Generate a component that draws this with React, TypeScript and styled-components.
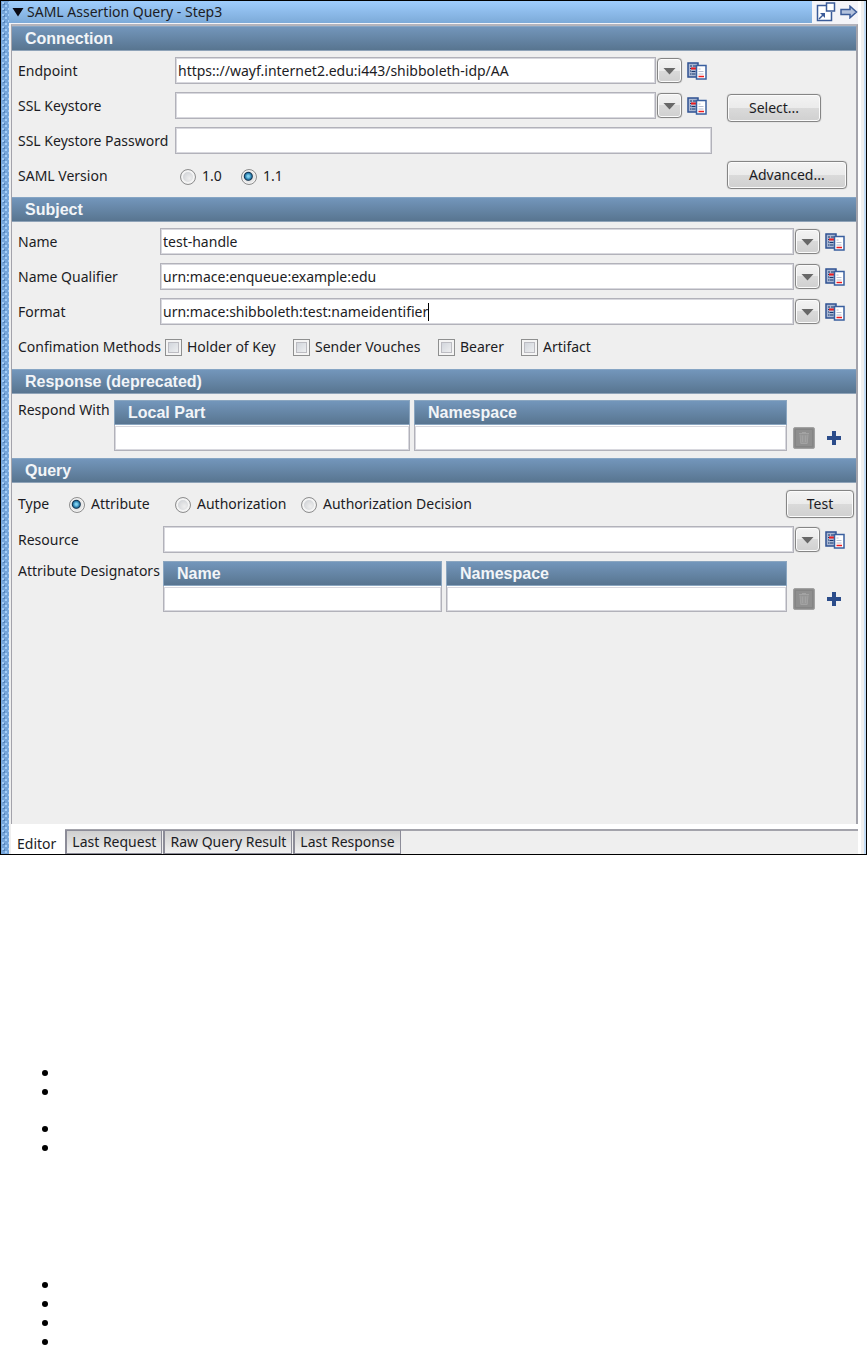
import React, { useId } from "react";
import styled, { createGlobalStyle } from "styled-components";

const GlobalStyle = createGlobalStyle`
  *, *::before, *::after { box-sizing: border-box; }
  body { margin: 0; background: #fff; color: #1c1c24; font: 14px/20px "Noto Sans", sans-serif; }
  button, input { font: inherit; color: inherit; }
  h1, h2, ul { margin: 0; padding: 0; }
`;

const barGradient = "linear-gradient(#7396bb, #587590)";

const Window = styled.main`
  display: flex;
  margin-right: 1px;
  border: 1px solid #000;
  background: #efefef;
`;

const Grip = styled.div`
  flex: 0 0 8px;
  background:
    radial-gradient(circle at 2px 2px, #a3cdf8 1px, transparent 1px) 0 0 / 6px 6px,
    radial-gradient(circle at 3px 3px, #5684bb 1px, transparent 1px) 0 0 / 6px 6px,
    radial-gradient(circle at 5px 5px, #a3cdf8 1px, transparent 1px) 0 0 / 6px 6px,
    #75a5da;
`;

const Content = styled.div`
  flex: 1;
  min-width: 0;
`;

const Edge = styled.div`
  flex: 0 0 8px;
  border-left: 3px solid #fff;
  border-right: 2px solid #c3dcf5;
`;

const TitleBar = styled.header`
  display: flex;
  height: 23px;
  border-bottom: 1px solid #f4f4f8;
  background: #f4f4f8;
`;

const TitleToggle = styled.button`
  flex: 1;
  display: flex;
  align-items: center;
  gap: 3px;
  padding: 0 3px;
  border: 0;
  background: linear-gradient(#9fcdfd, #7caad8);
`;

const Title = styled.h1`
  font-size: 14px;
  font-weight: 400;
  line-height: 20px;
`;

const TitleActions = styled.div`
  display: flex;
  align-items: center;
  gap: 4px;
  padding: 0 0 0 4px;
`;

const IconButton = styled.button`
  display: flex;
  align-items: center;
  justify-content: center;
  flex: none;
  padding: 0;
  border: 0;
  background: none;
`;

const Panel = styled.div`
  min-height: 800px;
  margin-left: 2px;
  border: 1px solid #a3a3ab;
  border-top: 2px solid #b4b4bc;
  border-right-width: 2px;
  border-bottom: 0;
`;

const SectionTitle = styled.h2`
  height: 25px;
  padding-left: 13px;
  border-top: 1px solid #86a5c4;
  border-bottom: 1px solid #8fa3b8;
  background: ${barGradient};
  color: #f2f5f8;
  font: bold 16px/24px "Liberation Sans", sans-serif;
`;

const ConnectionBody = styled.div`
  display: grid;
  grid-template-columns: 1fr 129px;
  gap: 15px;
  padding: 2px 0 3px 6px;
`;

const ButtonColumn = styled.div`
  display: flex;
  flex-direction: column;
  align-items: flex-start;
  gap: 39px;
  padding-top: 41px;
`;

const SectionBody = styled.div<{ $top?: number }>`
  padding: ${(p) => p.$top ?? 2}px 0 4px 6px;
`;

const FieldRow = styled.div<{ $label: number; $end: number }>`
  display: grid;
  grid-template-columns: ${(p) => p.$label}px 1fr;
  align-items: center;
  height: 35px;
  padding-right: ${(p) => p.$end}px;
`;

const FieldGroup = styled.div`
  display: flex;
  align-items: center;
  min-width: 0;
`;

const InputShell = styled.span`
  flex: 1;
  display: flex;
  align-items: center;
  min-width: 0;
  height: 27px;
  padding: 0 2px;
  border: 1px solid #b2b2ba;
  outline: 1px solid #d8d8de;
  outline-offset: -2px;
  background: #fff;
`;

const TextInput = styled.input<{ $fit?: boolean }>`
  ${(p) => (p.$fit ? "field-sizing: content;" : "flex: 1;")}
  min-width: 0;
  height: 20px;
  padding: 0;
  border: 0;
  outline: 0;
  background: none;
`;

const Caret = styled.span`
  width: 1px;
  height: 18px;
  background: #000;
`;

const RaisedButton = styled.button`
  height: 28px;
  padding: 0 21px;
  border: 1px solid #858585;
  border-radius: 4px;
  box-shadow: inset 0 0 0 1px #fbfbfb, 0 0 1px #999;
  background: linear-gradient(#f3f3f3, #ebebeb 50%, #dadada 50%, #d0d0d0);
`;

const TestButton = styled(RaisedButton)`
  margin-right: 2px;
  padding: 0;
`;

const DropButton = styled(RaisedButton)`
  display: flex;
  align-items: center;
  justify-content: center;
  width: 25px;
  height: 25px;
  margin: 0 5px 0 1px;
  padding: 0;
`;

const Choices = styled.div<{ $columns: string }>`
  display: grid;
  grid-template-columns: ${(p) => p.$columns};
  align-items: center;
  height: 36px;
`;

const ChoiceLabel = styled.label<{ $gap?: number }>`
  display: flex;
  align-items: center;
  gap: ${(p) => p.$gap ?? 6}px;
  white-space: nowrap;
`;

const Radio = styled.input`
  appearance: none;
  width: 16px;
  height: 16px;
  margin: 2px 0 0;
  border: 1px solid #8e8e8e;
  border-radius: 50%;
  box-shadow: inset 0 0 0 2px #f4f4f4;
  background: radial-gradient(circle at 60% 60%, #eee, #bfc3c9);
  &:checked {
    background: radial-gradient(circle at 45% 45%, #7fd0ee 0 1px, #2a7eae 3px, #12334f 4px, #e6e6e6 5px);
    box-shadow: inset 0 0 0 1px #f4f4f4;
  }
`;

const Checkbox = styled.input`
  appearance: none;
  width: 17px;
  height: 17px;
  margin: 0;
  border: 1px solid #8e8f8f;
  outline: 1px solid #bcbcc2;
  outline-offset: -4px;
  box-shadow: inset 0 0 0 2px #f4f4f4;
  background: linear-gradient(135deg, #c9ced6, #f6f6f6);
`;

const TableRow = styled.div<{ $label: number; $top: number; $bottom: number }>`
  display: grid;
  grid-template-columns: ${(p) => p.$label}px 1fr auto;
  padding: ${(p) => p.$top}px 14px ${(p) => p.$bottom}px 0;
`;

const DataTable = styled.table`
  width: 100%;
  table-layout: fixed;
  border-collapse: collapse;
`;

const HeadCell = styled.th<{ $width?: string; $first?: boolean }>`
  width: ${(p) => p.$width ?? "auto"};
  height: 25px;
  padding: 0 ${(p) => (p.$first ? 4 : 0)}px 0 0;
  text-align: left;
`;

const HeadFill = styled.div`
  height: 25px;
  padding-left: 13px;
  border: 1px solid #8ba6c0;
  background: ${barGradient};
  color: #f2f5f8;
  font: bold 16px/24px "Liberation Sans", sans-serif;
`;

const BodyCell = styled.td<{ $first?: boolean }>`
  padding: 0 ${(p) => (p.$first ? 4 : 0)}px 0 0;
`;

const CellInput = styled.input`
  display: block;
  width: 100%;
  height: 26px;
  padding: 0 3px;
  border: 1px solid #b2b2ba;
  border-top: 0;
  outline: 1px solid #d8d8de;
  outline-offset: -2px;
  background: #fff;
`;

const TableActions = styled.div`
  display: flex;
  align-items: center;
  align-self: end;
  gap: 11px;
  padding: 0 0 2px 6px;
`;

const TabBar = styled.div`
  display: flex;
  height: 30px;
  margin-left: 2px;
`;

const ActiveTab = styled.button`
  padding: 9px 9px 0 6px;
  border: 0;
  background: #fff;
`;

const TabRest = styled.div`
  flex: 1;
  display: flex;
  border-top: 5px solid #fff;
`;

const TabLine = styled.div`
  flex: 1;
  display: flex;
  gap: 1px;
  border-top: 2px solid #a3a3ab;
`;

const Tab = styled.button`
  height: 24px;
  margin-top: -1px;
  padding: 0 5px;
  border: 1px solid #8c8c98;
  border-left-width: 2px;
  background: linear-gradient(#cfcfcf, #f1f1f1);
  line-height: 20px;
`;

const Notes = styled.section`
  padding: 215px 0 0 42px;
`;

const BulletList = styled.ul<{ $gap: number }>`
  display: grid;
  gap: 13px;
  padding-bottom: ${(p) => p.$gap}px;
  list-style: none;
`;

const Bullet = styled.li`
  width: 6px;
  height: 6px;
  border-radius: 50%;
  background: #000;
`;

const ArrowDown = () => (
  <svg width="13" height="8" viewBox="0 0 13 8" aria-hidden="true">
    <path d="M0.500 1h12L6.500 7.500z" fill="#686868" />
  </svg>
);

const CompareIcon = () => (
  <svg width="20" height="18" viewBox="0 0 20 18" aria-hidden="true">
    <rect x="1" y="1" width="10" height="14" fill="#a9b7d3" stroke="#2f5292" strokeWidth="1.500" />
    <path d="M3 4h2M3 6.500h1M3 9h1M3 12h1" stroke="#17386f" />
    <path d="M4.500 9.500h4M4.500 12h4M6 4h3" stroke="#17386f" />
    <path d="M4 6.500h5" stroke="#f01c1c" strokeWidth="2" />
    <rect x="9.500" y="3.500" width="9.500" height="13.500" fill="#fff" stroke="#3a5f9f" strokeWidth="1.500" />
    <path d="M11.500 7h2M11.500 9.500h5M11.500 12h5" stroke="#b5bdd0" />
    <path d="M11.500 14.500h5.500" stroke="#f01c1c" strokeWidth="1.500" />
  </svg>
);

const TrashIcon = () => (
  <svg width="22" height="22" viewBox="0 0 22 22" aria-hidden="true">
    <rect x="0.500" y="0.500" width="21" height="21" rx="1.500" fill="#8c8c8c" stroke="#a2a2a2" />
    <rect x="2.500" y="2.500" width="17" height="17" fill="#8f8f8f" stroke="#858585" />
    <path d="M6 6.500h10M9 5.500h4M7 7.500l.8 9h6.400l.8-9M9.500 8.500v6.500M12.500 8.500v6.500" fill="#999" stroke="#a3a3a3" />
  </svg>
);

const PlusIcon = () => (
  <svg width="16" height="16" viewBox="0 0 16 16" aria-hidden="true">
    <path d="M6 1h4v5h5v4h-5v5H6v-5H1V6h5z" fill="#2b4c8a" />
  </svg>
);

const PopOutIcon = () => (
  <svg width="20" height="20" viewBox="0 0 20 20" aria-hidden="true">
    <path d="M1 4h9v6h6v9H1z" fill="#fff" />
    <path d="M11 3.500H1.500v15h14V10" fill="none" stroke="#3b5b98" strokeWidth="1.500" />
    <rect x="10.500" y="1" width="8" height="8" fill="#fff" stroke="#3b5b98" strokeWidth="1.500" />
    <path d="M3 17l4-4" stroke="#3b5b98" strokeWidth="1.500" />
    <path d="M4 11h5v5z" fill="#3b5b98" />
  </svg>
);

const ArrowRightIcon = () => (
  <svg width="18" height="14" viewBox="0 0 18 14" aria-hidden="true">
    <path d="M1 4.500h9V1.200L16.500 7 10 12.800V9.500H1z" fill="#b4c2dc" stroke="#3b5b98" strokeWidth="1.500" />
  </svg>
);

interface FieldProps {
  label: string;
  labelWidth: number;
  end?: number;
  value?: string;
  type?: string;
  plain?: boolean;
  caret?: boolean;
}

function Field({ label, labelWidth, end = 0, value = "", type = "text", plain, caret }: FieldProps) {
  const id = useId();
  return (
    <FieldRow $label={labelWidth} $end={end}>
      <label htmlFor={id}>{label}</label>
      <FieldGroup>
        <InputShell>
          <TextInput id={id} type={type} defaultValue={value} $fit={caret} />
          {caret && <Caret />}
        </InputShell>
        {!plain && (
          <>
            <DropButton type="button" aria-label={`${label} source`}><ArrowDown /></DropButton>
            <IconButton type="button" aria-label={`${label} values`}><CompareIcon /></IconButton>
          </>
        )}
      </FieldGroup>
    </FieldRow>
  );
}

function RadioOption({ name, label, checked }: { name: string; label: string; checked?: boolean }) {
  return (
    <ChoiceLabel>
      <Radio type="radio" name={name} defaultChecked={checked} />
      {label}
    </ChoiceLabel>
  );
}

interface PairTableProps {
  label: string;
  labelWidth: number;
  columns: [string, string];
  split: string;
  top: number;
  bottom: number;
}

function PairTable({ label, labelWidth, columns, split, top, bottom }: PairTableProps) {
  const id = useId();
  return (
    <TableRow $label={labelWidth} $top={top} $bottom={bottom}>
      <span id={id}>{label}</span>
      <DataTable aria-labelledby={id}>
        <thead>
          <tr>
            <HeadCell $first $width={split}><HeadFill>{columns[0]}</HeadFill></HeadCell>
            <HeadCell><HeadFill>{columns[1]}</HeadFill></HeadCell>
          </tr>
        </thead>
        <tbody>
          <tr>
            <BodyCell $first><CellInput aria-label={columns[0]} /></BodyCell>
            <BodyCell><CellInput aria-label={columns[1]} /></BodyCell>
          </tr>
        </tbody>
      </DataTable>
      <TableActions>
        <IconButton type="button" aria-label="Delete row" disabled><TrashIcon /></IconButton>
        <IconButton type="button" aria-label="Add row"><PlusIcon /></IconButton>
      </TableActions>
    </TableRow>
  );
}

const methods = ["Holder of Key", "Sender Vouches", "Bearer", "Artifact"];
const otherTabs = ["Last Request", "Raw Query Result", "Last Response"];

export default function App() {
  return (
    <>
      <GlobalStyle />
      <Window>
        <Grip />
        <Content>
          <TitleBar>
            <TitleToggle type="button">
              <svg width="12" height="10" viewBox="0 0 12 10" aria-hidden="true">
                <path d="M0.500 1h11L6 9.500z" fill="#0a0a14" />
              </svg>
              <Title>SAML Assertion Query - Step3</Title>
            </TitleToggle>
            <TitleActions>
              <IconButton type="button" aria-label="Open in window"><PopOutIcon /></IconButton>
              <IconButton type="button" aria-label="Next"><ArrowRightIcon /></IconButton>
            </TitleActions>
          </TitleBar>
          <Panel>
            <SectionTitle>Connection</SectionTitle>
            <ConnectionBody>
              <div>
                <Field label="Endpoint" labelWidth={157} end={5} value="https:://wayf.internet2.edu:i443/shibboleth-idp/AA" />
                <Field label="SSL Keystore" labelWidth={157} end={5} />
                <Field label="SSL Keystore Password" labelWidth={157} type="password" plain />
                <Choices role="radiogroup" aria-label="SAML Version" $columns="162px 61px 1fr">
                  <span>SAML Version</span>
                  <RadioOption name="version" label="1.0" />
                  <RadioOption name="version" label="1.1" checked />
                </Choices>
              </div>
              <ButtonColumn>
                <RaisedButton type="button">Select...</RaisedButton>
                <RaisedButton type="button">Advanced...</RaisedButton>
              </ButtonColumn>
            </ConnectionBody>

            <SectionTitle>Subject</SectionTitle>
            <SectionBody>
              <Field label="Name" labelWidth={142} end={11} value="test-handle" />
              <Field label="Name Qualifier" labelWidth={142} end={11} value="urn:mace:enqueue:example:edu" />
              <Field label="Format" labelWidth={142} end={11} value="urn:mace:shibboleth:test:nameidentifier" caret />
              <Choices role="group" aria-label="Confimation Methods" $columns="147px 128px 145px 83px 1fr">
                <span>Confimation Methods</span>
                {methods.map((method) => (
                  <ChoiceLabel key={method} $gap={5}>
                    <Checkbox type="checkbox" />
                    {method}
                  </ChoiceLabel>
                ))}
              </Choices>
            </SectionBody>

            <SectionTitle>Response (deprecated)</SectionTitle>
            <SectionBody>
              <PairTable label="Respond With" labelWidth={96} columns={["Local Part", "Namespace"]} split="300px" top={4} bottom={3} />
            </SectionBody>

            <SectionTitle>Query</SectionTitle>
            <SectionBody $top={3}>
              <Choices role="radiogroup" aria-label="Type" $columns="51px 106px 126px 1fr 70px">
                <span>Type</span>
                <RadioOption name="type" label="Attribute" checked />
                <RadioOption name="type" label="Authorization" />
                <RadioOption name="type" label="Authorization Decision" />
                <TestButton type="button">Test</TestButton>
              </Choices>
              <Field label="Resource" labelWidth={145} end={11} />
              <PairTable label="Attribute Designators" labelWidth={145} columns={["Name", "Namespace"]} split="283px" top={4} bottom={0} />
            </SectionBody>
          </Panel>
          <TabBar role="tablist">
            <ActiveTab type="button" role="tab" aria-selected>Editor</ActiveTab>
            <TabRest>
              <TabLine>
                {otherTabs.map((tab) => (
                  <Tab key={tab} type="button" role="tab" aria-selected={false}>{tab}</Tab>
                ))}
              </TabLine>
            </TabRest>
          </TabBar>
        </Content>
        <Edge />
      </Window>
      <Notes>
        <BulletList $gap={31}>
          <Bullet />
          <Bullet />
        </BulletList>
        <BulletList $gap={131}>
          <Bullet />
          <Bullet />
        </BulletList>
        <BulletList $gap={0}>
          <Bullet />
          <Bullet />
          <Bullet />
          <Bullet />
        </BulletList>
      </Notes>
    </>
  );
}
